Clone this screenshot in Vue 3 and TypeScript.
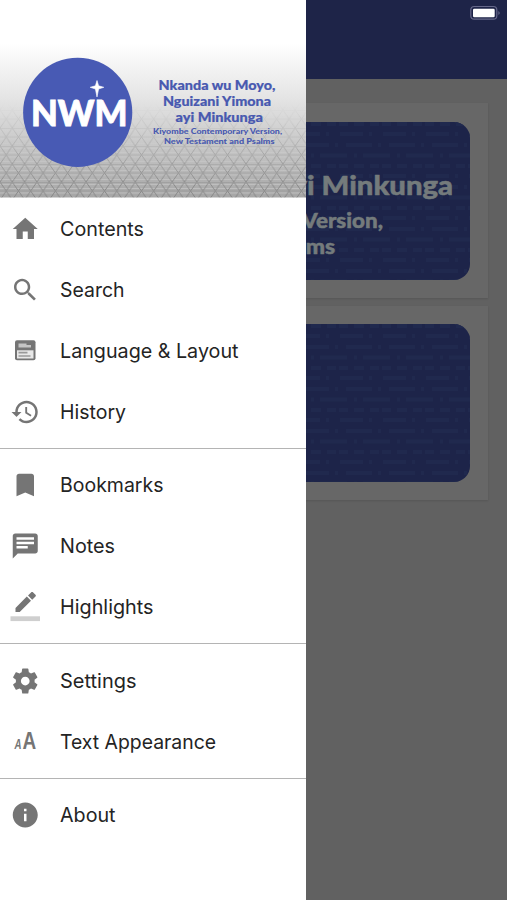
<script setup lang="ts">
interface MenuItem {
  label: string
  icon: string
  width: number
}

const groups: MenuItem[][] = [
  [
    { label: 'Contents', icon: 'home', width: 84 },
    { label: 'Search', icon: 'search', width: 64.5 },
    { label: 'Language & Layout', icon: 'layout', width: 178.5 },
    { label: 'History', icon: 'history', width: 66 },
  ],
  [
    { label: 'Bookmarks', icon: 'bookmark', width: 103.5 },
    { label: 'Notes', icon: 'notes', width: 55 },
    { label: 'Highlights', icon: 'highlight', width: 93.5 },
  ],
  [
    { label: 'Settings', icon: 'settings', width: 76.5 },
    { label: 'Text Appearance', icon: 'text', width: 156 },
  ],
  [{ label: 'About', icon: 'about', width: 55.5 }],
]

const paths: Record<string, string> = {
  home: 'M10 20v-6h4v6h5v-8h3L12 3 2 12h3v8z',
  search:
    'M15.5 14h-.79l-.28-.27C15.41 12.59 16 11.11 16 9.5 16 5.91 13.09 3 9.5 3S3 5.91 3 9.5 5.91 16 9.5 16c1.61 0 3.09-.59 4.23-1.57l.27.28v.79l5 4.99L20.49 19l-4.99-5zm-6 0C7.01 14 5 11.99 5 9.5S7.01 5 9.5 5 14 7.01 14 9.5 11.99 14 9.5 14z',
  history:
    'M13 3c-4.97 0-9 4.03-9 9H1l3.89 3.89.07.14L9 12H6c0-3.87 3.13-7 7-7s7 3.13 7 7-3.13 7-7 7c-1.93 0-3.68-.79-4.94-2.06l-1.42 1.42C8.27 19.99 10.51 21 13 21c4.97 0 9-4.03 9-9s-4.03-9-9-9zm-1 5v5l4.28 2.54.72-1.21-3.5-2.08V8H12z',
  bookmark: 'M17 3H7c-1.1 0-1.99.9-1.99 2L5 21l7-3 7 3V5c0-1.1-.9-2-2-2z',
  notes:
    'M20 2H4c-1.1 0-1.99.9-1.99 2L2 22l4-4h14c1.1 0 2-.9 2-2V4c0-1.1-.9-2-2-2zM5 5h14v2H5V5zm9 9H5v-2h9v2zm5-3.5H5v-2h14v2z',
  settings:
    'M19.43 12.98c.04-.32.07-.64.07-.98s-.03-.66-.07-.98l2.11-1.65c.19-.15.24-.42.12-.64l-2-3.46c-.12-.22-.39-.3-.61-.22l-2.49 1c-.52-.4-1.08-.73-1.69-.98l-.38-2.65C14.46 2.18 14.25 2 14 2h-4c-.25 0-.46.18-.49.42l-.38 2.65c-.61.25-1.17.59-1.69.98l-2.49-1c-.23-.09-.49 0-.61.22l-2 3.46c-.13.22-.07.49.12.64l2.11 1.65c-.04.32-.07.65-.07.98s.03.66.07.98l-2.11 1.65c-.19.15-.24.42-.12.64l2 3.46c.12.22.39.3.61.22l2.49-1c.52.4 1.08.73 1.69.98l.38 2.65c.03.24.24.42.49.42h4c.25 0 .46-.18.49-.42l.38-2.65c.61-.25 1.17-.59 1.69-.98l2.49 1c.23.09.49 0 .61-.22l2-3.46c.12-.22.07-.49-.12-.64l-2.11-1.65zM12 15.5c-1.93 0-3.5-1.57-3.5-3.5s1.57-3.5 3.5-3.5 3.5 1.57 3.5 3.5-1.57 3.5-3.5 3.5z',
  about:
    'M12 2C6.48 2 2 6.48 2 12s4.48 10 10 10 10-4.48 10-10S17.52 2 12 2zm1 15h-2v-6h2v6zm0-8h-2V7h2v2z',
}
</script>

<template>
  <div class="screen">
    <div class="page">
      <div class="appbar"></div>
      <main class="cards">
        <section class="card">
          <svg class="cover" viewBox="0 0 433 158">
            <defs>
              <pattern id="weave" width="43" height="42" patternUnits="userSpaceOnUse">
                <path
                  d="M2 12h23M31 12h3M8 23h26M40 23h3M0 33.500h9M16 33.500h3M25 33.500h18M1 2h9M16 2h10M32 2h9"
                  stroke="#20294e"
                  stroke-width="4"
                />
              </pattern>
            </defs>
            <rect width="433" height="158" rx="16" fill="#1d2449" />
            <rect width="433" height="158" rx="16" fill="url(#weave)" />
            <g class="cover-text">
              <text x="240" y="73" font-size="26" textLength="176" lengthAdjust="spacingAndGlyphs">ayi Minkunga</text>
              <text x="265" y="106" font-size="21" textLength="81" lengthAdjust="spacingAndGlyphs">Version,</text>
              <text x="227" y="132" font-size="21" textLength="71" lengthAdjust="spacingAndGlyphs">Psalms</text>
            </g>
          </svg>
        </section>
        <section class="card">
          <svg class="cover" viewBox="0 0 433 158">
            <rect width="433" height="158" rx="16" fill="#1d2449" />
            <rect width="433" height="158" rx="16" fill="url(#weave)" />
          </svg>
        </section>
      </main>
    </div>

    <svg class="battery" viewBox="0 0 32 16">
      <rect x="1.800" y="1.500" width="26" height="12.700" rx="3.500" fill="none" stroke="#66688a" stroke-width="1.200" />
      <rect x="4" y="3.700" width="21.700" height="8.500" rx="1.300" fill="#fff" />
      <path d="M29.500 6q2.200 2 0 4z" fill="#77799a" />
    </svg>

    <aside class="drawer">
      <svg class="banner" viewBox="0 0 306 198">
        <defs>
          <linearGradient id="fade" x1="0" y1="0" x2="0" y2="1">
            <stop offset="0.220" stop-color="#fff" />
            <stop offset="0.500" stop-color="#e4e4e4" />
            <stop offset="0.720" stop-color="#c9c9c9" />
            <stop offset="1" stop-color="#a6a6a6" />
          </linearGradient>
          <linearGradient id="reveal" x1="0" y1="0" x2="0" y2="1">
            <stop offset="0.520" stop-color="#000" />
            <stop offset="0.950" stop-color="#fff" />
          </linearGradient>
          <mask id="veil"><rect width="306" height="198" fill="url(#reveal)" /></mask>
          <pattern id="triangles" width="12.300" height="18" patternUnits="userSpaceOnUse" y="2">
            <path d="M0 2.500h12.300M0 6.500h12.300M0 11h12.300M0 15.500h12.300" stroke="#d4d4d4" stroke-width="0.800" />
            <path
              d="M0 0L6.150 9L12.300 0M0 18L6.150 9L12.300 18"
              fill="none"
              stroke="#646464"
              stroke-width="0.900"
            />
            <path d="M0 .5h12.300M0 9h12.300" stroke="#888" stroke-width="0.700" />
          </pattern>
        </defs>
        <rect width="306" height="197.500" fill="url(#fade)" />
        <rect width="306" height="197.500" fill="url(#triangles)" mask="url(#veil)" opacity=".55" />
        <circle cx="77.700" cy="112.300" r="54.600" fill="#485ab4" />
        <text class="logo" x="31" y="126" font-size="36.500" textLength="96.500" lengthAdjust="spacingAndGlyphs">NWM</text>
        <path d="M97 80.500l1.600 5.300 5.200 1.500-5.200 1.700L97 97l-1.600-8-5.200-1.700 5.200-1.500z" fill="#fff" stroke="#fff" stroke-width=".6" />
        <g class="title">
          <text x="158.500" y="89.500" textLength="117" lengthAdjust="spacingAndGlyphs">Nkanda wu Moyo,</text>
          <text x="163" y="105.500" textLength="108" lengthAdjust="spacingAndGlyphs">Nguizani Yimona</text>
          <text x="175.500" y="121.500" textLength="87.500" lengthAdjust="spacingAndGlyphs">ayi Minkunga</text>
        </g>
        <g class="subtitle">
          <text x="153" y="133.500" textLength="129" lengthAdjust="spacingAndGlyphs">Kiyombe Contemporary Version,</text>
          <text x="164" y="143.500" textLength="110.500" lengthAdjust="spacingAndGlyphs">New Testament and Psalms</text>
        </g>
      </svg>

      <nav>
        <ul v-for="(group, g) in groups" :key="g" class="group">
          <li v-for="item in group" :key="item.label" class="item">
            <svg v-if="item.icon === 'layout'" class="icon" viewBox="0 0 30 30">
              <rect x="5" y="4.300" width="20.500" height="20" rx="2" fill="#757575" />
              <path d="M7 14.300h16.500v8.200H7z" fill="#e8e8e8" />
              <path d="M8.500 7.500h8v1.500h4.500v2.500H8.500z" fill="#c4c4c4" />
              <path d="M8.500 16.700h9M8.500 20h12" stroke="#999" stroke-width="1.700" />
            </svg>
            <svg v-else-if="item.icon === 'highlight'" class="icon" viewBox="0 0 30 30">
              <path
                d="M5.200 18.200v4.200h4.200L20.700 11.100l-4.200-4.200zM25.200 6.700c.5-.5.5-1.100 0-1.600l-2.600-2.600c-.5-.5-1.100-.5-1.600 0l-3.300 3.300 4.200 4.200z"
                fill="#757575"
                transform="translate(.3 -2.300)"
              />
              <path d="M.5 24.300h29.500v4.800H.5z" fill="#cfcfcf" />
            </svg>
            <svg v-else-if="item.icon === 'text'" class="icon" viewBox="0 0 30 30">
              <g class="letters">
                <text x="4.500" y="22" font-size="15" font-style="italic" textLength="7" lengthAdjust="spacingAndGlyphs">A</text>
                <text x="12.500" y="22" font-size="23" textLength="13.700" lengthAdjust="spacingAndGlyphs">A</text>
              </g>
            </svg>
            <svg v-else class="icon" viewBox="0 0 24 24">
              <path :d="paths[item.icon]" fill="#757575" transform="translate(.2 0)" />
            </svg>
            <svg class="label" viewBox="0 0 220 30">
              <text x="0" y="22" :textLength="item.width" lengthAdjust="spacingAndGlyphs">{{ item.label }}</text>
            </svg>
          </li>
        </ul>
      </nav>
    </aside>
  </div>
</template>

<style>
body {
  margin: 0;
  overflow: hidden;
}
</style>

<style scoped>
.screen {
  position: relative;
  width: 507px;
  height: 900px;
  overflow: hidden;
  background: #616161;
  font-family: Inter, 'Liberation Sans', sans-serif;
}
.appbar {
  height: 79px;
  background: #1e2448;
}
.cards {
  display: flex;
  flex-direction: column;
  gap: 8px;
  padding: 24px 19px 0;
}
.card {
  box-sizing: border-box;
  height: 194.500px;
  padding: 18.500px 18px;
  background: #676767;
  box-shadow: 0 1px 2px rgba(0, 0, 0, 0.12);
}
.cover {
  display: block;
  width: 433px;
  height: 158px;
}
.cover-text {
  font-family: Lato, sans-serif;
  font-weight: 900;
  fill: #747b7c;
  stroke: #747b7c;
  stroke-width: 0.5px;
}
.battery {
  position: absolute;
  top: 5px;
  left: 469px;
  width: 32px;
  height: 16px;
}
.drawer {
  position: absolute;
  top: 0;
  left: 0;
  width: 306px;
  height: 900px;
  background: #fff;
}
.banner {
  display: block;
  width: 306px;
  height: 198px;
}
.logo {
  font-family: Lato, sans-serif;
  font-weight: 900;
  fill: #fff;
  stroke: #fff;
  stroke-width: 0.9px;
}
.title,
.subtitle {
  font-family: Lato, sans-serif;
  font-weight: 900;
  font-size: 13.500px;
  fill: #4859b0;
  stroke: #4859b0;
  stroke-width: 0.2px;
}
.subtitle {
  font-size: 8.300px;
  stroke-width: 0;
}
.group {
  margin: 0;
  padding: 0;
  list-style: none;
}
.group + .group {
  margin-top: 5.500px;
  padding-top: 5.700px;
  border-top: 1px solid #b4b4b4;
}
.item {
  display: flex;
  align-items: center;
  gap: 20px;
  height: 61.100px;
  padding-left: 10px;
}
.icon {
  width: 30px;
  height: 30px;
}
.letters {
  font-family: 'Liberation Sans', sans-serif;
  font-weight: 700;
  fill: #757575;
}
.label {
  width: 220px;
  height: 30px;
  font-size: 20px;
  fill: #242424;
}
</style>
